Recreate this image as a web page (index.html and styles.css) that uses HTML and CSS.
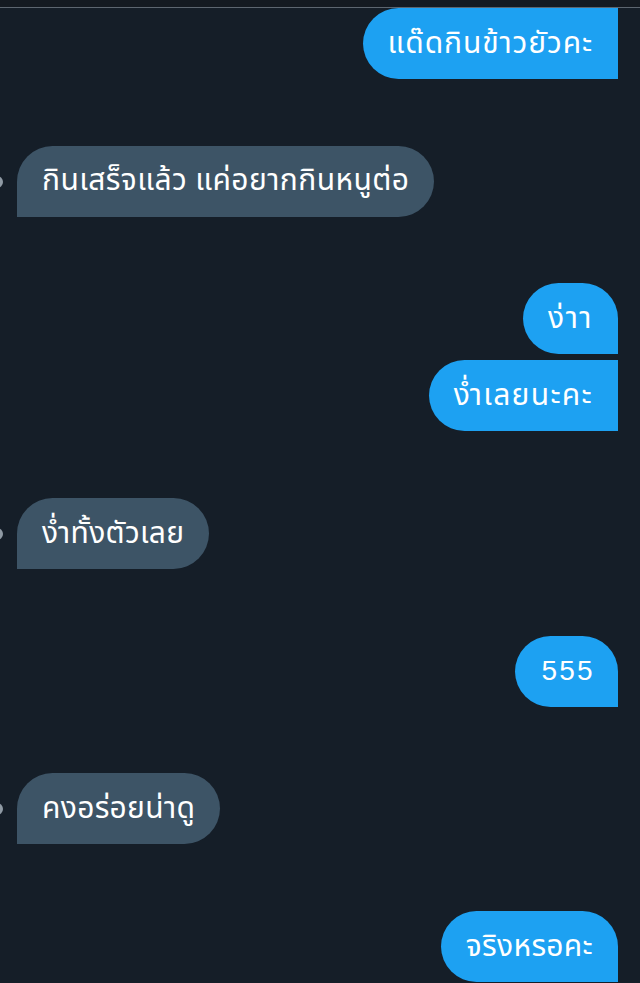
FILE: index.html
```html
<!DOCTYPE html>
<html lang="th">
<head>
<meta charset="utf-8">
<link rel="stylesheet" href="styles.css">
</head>
<body>
<div class="topbar"></div>
<div class="chat">
  <div class="group sent first">
    <div class="bubble sent-bubble cont ls-wide">แด๊ดกินข้าวยัวคะ</div>
  </div>
  <div class="group recv">
    <span class="avatar"></span>
    <div class="bubble recv-bubble ls-mid">กินเสร็จแล้ว แค่อยากกินหนูต่อ</div>
  </div>
  <div class="group sent">
    <div class="bubble sent-bubble ls-short">ง่าา</div>
    <div class="bubble sent-bubble cont ls-xwide">ง่ำเลยนะคะ</div>
  </div>
  <div class="group recv">
    <span class="avatar"></span>
    <div class="bubble recv-bubble">ง่ำทั้งตัวเลย</div>
  </div>
  <div class="group sent">
    <div class="bubble sent-bubble num">555</div>
  </div>
  <div class="group recv">
    <span class="avatar"></span>
    <div class="bubble recv-bubble">คงอร่อยน่าดู</div>
  </div>
  <div class="group sent">
    <div class="bubble sent-bubble">จริงหรอคะ</div>
  </div>
</div>
</body>
</html>
```
FILE: styles.css
```css
html, body {
  margin: 0;
  padding: 0;
  background: #151e28;
  height: 983px;
  overflow: hidden;
}
body {
  font-family: "Noto Sans Thai", "Noto Sans", "DejaVu Sans", sans-serif;
  color: #ffffff;
}
.topbar {
  height: 7px;
  background: #141a21;
  border-bottom: 1px solid #5d6670;
}
.chat {
  display: flex;
  flex-direction: column;
  gap: 66.7px;
  padding: 0 22px 0 17px;
}
.group {
  display: flex;
  flex-direction: column;
  gap: 6px;
  position: relative;
}
.group.sent { align-items: flex-end; }
.group.recv { align-items: flex-start; }
.bubble {
  height: 71px;
  box-sizing: border-box;
  display: flex;
  align-items: center;
  padding: 0 25px;
  font-size: 30px;
  letter-spacing: 0.3px;
  white-space: nowrap;
}
.ls-wide { letter-spacing: 0.9px; }
.ls-xwide { letter-spacing: 1.3px; }
.ls-mid { letter-spacing: 0.42px; }
.ls-short { letter-spacing: 1.5px; }
.sent-bubble {
  background: #1da1f2;
  border-radius: 36px 36px 0 36px;
}
.sent-bubble.cont {
  border-radius: 36px 0 0 36px;
}
.recv-bubble {
  background: #3d5466;
  border-radius: 36px 36px 36px 0;
}
.num {
  font-family: "Liberation Sans", Arial, sans-serif;
  font-size: 28px;
  letter-spacing: 2.3px;
  padding: 0 23px 0 26px;
}
.avatar {
  position: absolute;
  left: -26px;
  top: 30px;
  width: 12px;
  height: 12px;
  border-radius: 50%;
  background: #8f9aa4;
}
```
